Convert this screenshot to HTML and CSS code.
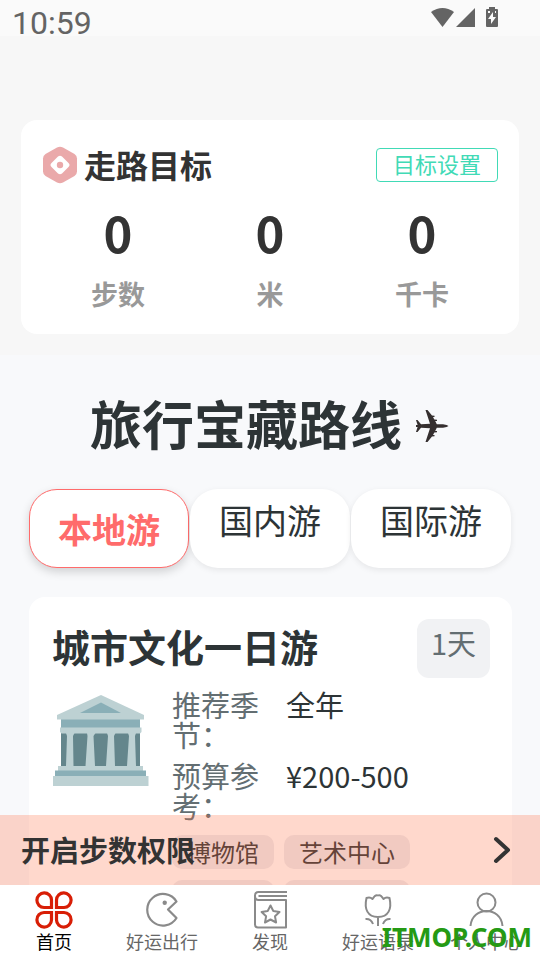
FILE: index.html
```html
<!DOCTYPE html>
<html lang="zh-CN">
<head>
<meta charset="utf-8">
<meta name="viewport" content="width=device-width, initial-scale=1">
<title>首页</title>
<link rel="stylesheet" href="styles.css">
</head>
<body>
<header class="status">
  <span class="clock">10:59</span>
  <svg class="status-icons" width="70" height="22" viewBox="0 0 70 22" fill="#646464" aria-hidden="true">
    <path d="M0 5Q11.500-3 23 5L11.500 20Z"/>
    <path d="M25 20L44 1V20Z"/>
    <path fill-rule="evenodd" d="M58 0h6v2h2q1 0 1 1v16q0 1-1 1H56q-1 0-1-1V3q0-1 1-1h2ZM62 5l-5 7h3v5l5-7h-3ZM57 4v2h2V4ZM64 4v2h1V4Z"/>
  </svg>
</header>

<main class="content">
  <section class="goal">
    <div class="goal-card">
      <div class="goal-head">
        <svg width="36" height="38" viewBox="0 0 36 38" aria-hidden="true">
          <path d="M15 1.500Q18 0 21 1.500L32.500 8Q35 9.500 35 12.500V25.500Q35 28.500 32.500 30L21 36.500Q18 38 15 36.500L3.500 30Q1 28.500 1 25.500V12.500Q1 9.500 3.500 8Z" fill="#eaa9aa"/>
          <path d="M16 10.500Q18 9 20 10.500L26.500 17Q28.500 19 26.500 21L20 27.500Q18 29 16 27.500L9.500 21Q7.500 19 9.500 17Z" fill="#fff"/>
          <circle cx="18" cy="19" r="3.200" fill="#eaa9aa"/>
        </svg>
        <h2>走路目标</h2>
        <button class="goal-set" type="button">目标设置</button>
      </div>
      <dl class="stats">
        <div><dd>0</dd><dt>步数</dt></div>
        <div><dd>0</dd><dt>米</dt></div>
        <div><dd>0</dd><dt>千卡</dt></div>
      </dl>
    </div>
  </section>

  <section class="travel">
    <h1>旅行宝藏路线
      <svg width="34" height="34" viewBox="0 0 34 34" fill="#352f2f" aria-hidden="true">
        <path d="M1 11H2.500L6 15.200 15 14.700 10.500 1H12.500L17 6.500 19.500 6.800V8H18L19.300 10.500 22 10.800V12H20.200L21.800 15.200 28 15.300Q32.500 16 33.500 17 32.500 18 28 18.700L21.800 18.800 20.200 22H22V23.200L19.300 23.500 18 26H19.500V27.200L17 27.500 12.500 33H10.500L15 19.300 6 18.800 2.500 23H1L2.600 18H1V16H2.600Z"/>
      </svg>
    </h1>
    <div class="tabs" role="tablist">
      <button class="tab active" type="button" role="tab" aria-selected="true">本地游</button>
      <button class="tab" type="button" role="tab" aria-selected="false">国内游</button>
      <button class="tab" type="button" role="tab" aria-selected="false">国际游</button>
    </div>
    <article class="route">
      <div class="route-head">
        <h3>城市文化一日游</h3>
        <span class="days">1天</span>
      </div>
      <div class="route-body">
        <svg class="museum" width="96" height="92" viewBox="0 0 96 92" aria-hidden="true">
          <path d="M8 24H87V82H8Z" fill="#64868c"/>
          <path d="M8 23H87V34H8Z" fill="#8aafb7"/>
          <path d="M48 0L91 20V24.500H4V20Z" fill="#bdd1d3"/>
          <path d="M48 7.500L68 18H27Z" fill="#8aafb7"/>
          <path d="M7 32.500H88.500V37L87 38.500H8.500L7 37Z" fill="#bdd1d3"/>
          <path d="M13 38H21.500L20 41 20.500 71H13L14 41ZM34 38H42.500L40.500 41 42 71H32.500L34.500 41ZM54 38H62.500L61 41 62 71H53L55 41ZM75 38H83L82 41 83 71H74L76 41Z" fill="#bdd1d3"/>
          <path d="M5 71H90V76H5Z" fill="#bdd1d3"/>
          <path d="M2 75.500H93V82H2Z" fill="#8aafb7"/>
          <path d="M0 81H95.500V91H0Z" fill="#bdd1d3"/>
        </svg>
        <div class="info">
          <div class="row"><span class="key">推荐季节：</span><span class="value">全年</span></div>
          <div class="row"><span class="key">预算参考：</span><span class="value">¥200-500</span></div>
          <div class="tags">
            <span>博物馆</span><span>艺术中心</span>
            <span class="short"></span><span class="long"></span>
          </div>
        </div>
      </div>
    </article>
  </section>

  <button class="banner" type="button">
    <span>开启步数权限</span>
    <svg width="18" height="28" viewBox="0 0 18 28" fill="none" stroke="#333" stroke-width="4" stroke-linecap="round" stroke-linejoin="round" aria-hidden="true"><path d="M3 3L15 14 3 25"/></svg>
  </button>
</main>

<nav class="nav">
  <a class="current" href="#home">
    <svg width="40" height="40" viewBox="0 0 40 40" fill="none" stroke="#d81e06" stroke-width="3.200" aria-hidden="true">
      <path d="M17.500 17.500H10A7.300 7.300 0 1 1 17.500 10ZM22.500 17.500V10A7.300 7.300 0 1 1 30 17.500ZM17.500 22.500V30A7.300 7.300 0 1 1 10 22.500ZM22.500 22.500H30A7.300 7.300 0 1 1 22.500 30Z"/>
    </svg>首页</a>
  <a href="#trip">
    <svg width="40" height="40" viewBox="0 0 40 40" fill="none" stroke="#8a8a8a" stroke-width="2.200" stroke-linejoin="round" aria-hidden="true">
      <path d="M34.500 11.500A15.800 15.800 0 1 0 34.500 28L26 19.500Z"/><circle cx="22.700" cy="12.700" r="2.200" fill="#8a8a8a" stroke="none"/>
    </svg>好运出行</a>
  <a href="#discover">
    <svg width="40" height="40" viewBox="0 0 40 40" fill="none" stroke="#8a8a8a" stroke-width="2" stroke-linejoin="round" aria-hidden="true">
      <path d="M37 2H8.500Q5 2 5 5.500V34.500Q5 37.500 8 37.500H36V10H8.500Q5 10 5 6M37 6H8.500"/>
      <path d="M20.500 15.500L23.300 21 29.500 22 25 26.300 26.100 32.500 20.500 29.500 15 32.500 16.100 26.300 11.600 22 17.700 21Z"/>
    </svg>发现</a>
  <a href="#quotes">
    <svg width="40" height="40" viewBox="0 0 40 40" fill="none" stroke="#8a8a8a" stroke-width="2" stroke-linejoin="round" aria-hidden="true">
      <path d="M8.500 8Q12 6.500 14.500 9 17.500 4 20 5.500 22.500 4 25.500 9 28 6.500 31.500 8C34 19 30.500 27 20 27S6 19 8.500 8ZM20 27V36M7.500 29Q13 28.500 15 34M32.500 29Q27 28.500 25 34"/>
    </svg>好运语录</a>
  <a href="#me">
    <svg width="40" height="40" viewBox="0 0 40 40" fill="none" stroke="#8a8a8a" stroke-width="2" aria-hidden="true">
      <circle cx="20.500" cy="12.500" r="9"/><path d="M4.500 36C6 16 35 16 36.500 36"/>
    </svg>个人中心</a>
  <span class="watermark">ITMOP.COM</span>
</nav>
</body>
</html>
```
FILE: styles.css
```css
* {
  box-sizing: border-box;
  margin: 0;
  padding: 0;
}

body {
  display: flex;
  flex-direction: column;
  height: 100vh;
  overflow: hidden;
  background: #f8f9fb;
  color: #333;
  font-family: "Noto Sans CJK SC", sans-serif;
}

button {
  border: 0;
  background: none;
  color: inherit;
  font-family: inherit;
  cursor: pointer;
}

svg {
  display: block;
  flex: none;
}

.status {
  display: flex;
  justify-content: space-between;
  align-items: flex-start;
  height: 36px;
  padding: 7px 39px 0 12px;
  background: #fafafa;
}

.clock {
  color: #646464;
  font: 32px/32px Roboto, sans-serif;
}

.content {
  position: relative;
  flex: 1;
  min-height: 0;
  overflow: hidden;
}

.goal {
  padding: 84px 21px 21px;
  background: #f7f7f7;
}

.goal-card {
  padding: 27px 21px 20px;
  border-radius: 16px;
  background: #fff;
}

.goal-head {
  display: flex;
  align-items: center;
  gap: 6px;
  height: 36px;
}

.goal-head h2 {
  padding-bottom: 3px;
  font-size: 32px;
  line-height: 36px;
}

.goal-set {
  margin-left: auto;
  padding: 0 16px 4px;
  border: 1px solid #41dab6;
  border-radius: 4px;
  color: #41dab6;
  font-size: 22px;
  line-height: 28px;
}

.stats {
  display: grid;
  grid-template-columns: repeat(3, 1fr);
  margin-top: 18px;
  text-align: center;
  font-weight: bold;
}

.stats div {
  display: flex;
  flex-direction: column;
  gap: 12px;
}

.stats dd {
  font-size: 49px;
  line-height: 61px;
}

.stats dt {
  color: #999;
  font-size: 27px;
  line-height: 40px;
}

.travel {
  padding: 33px 28px 0 29px;
  color: #2d3436;
}

.travel h1 {
  display: flex;
  justify-content: center;
  align-items: center;
  gap: 13px;
  padding-right: 2px;
  font-size: 52px;
  line-height: 70px;
}

.travel h1 svg {
  margin-top: 6px;
}

.tabs {
  display: grid;
  grid-template-columns: repeat(3, 1fr);
  gap: 1px;
  margin-top: 31px;
  padding-right: 1px;
}

.tab {
  height: 79px;
  padding-bottom: 18px;
  border-radius: 28px;
  background: #fff;
  box-shadow: 0 2px 6px rgba(0, 0, 0, 0.08);
  font-size: 34px;
  line-height: 60px;
}

.tab.active {
  padding-bottom: 0;
  border: 1px solid #ff6b6b;
  box-shadow: 0 4px 10px rgba(0, 0, 0, 0.16);
  color: #ff6b6b;
  font-weight: bold;
}

.route {
  margin-top: 29px;
  padding: 22px 22px 22px 23px;
  border-radius: 16px;
  background: #fff;
}

.route-head {
  display: flex;
  justify-content: space-between;
  align-items: flex-start;
}

.route-head h3 {
  font-size: 38px;
  line-height: 53px;
}

.days {
  padding: 0 14px 13px;
  border-radius: 12px;
  background: #f1f2f4;
  color: #636e72;
  font-size: 29px;
  line-height: 46px;
}

.route-body {
  display: flex;
  gap: 23px;
  margin-top: 11px;
  font-size: 29px;
  line-height: 30px;
}

.museum {
  margin: 6px 0 0 1px;
}

.info {
  flex: 1;
}

.row {
  display: flex;
  gap: 24px;
  margin-bottom: 11px;
}

.key {
  flex: none;
  width: 90px;
  color: #636e72;
}

.tags {
  display: flex;
  flex-wrap: wrap;
  gap: 11px 10px;
  padding-top: 4px;
}

.tags span {
  height: 34px;
  padding: 0 15px;
  border-radius: 10px;
  background: #ececf0;
  font-size: 24px;
  line-height: 33px;
}

.tags .short {
  width: 102px;
}

.tags .long {
  width: 126px;
}

.banner {
  position: absolute;
  right: 0;
  bottom: 0;
  left: 0;
  display: flex;
  justify-content: space-between;
  align-items: center;
  height: 70px;
  padding: 0 29px 0 21px;
  background: rgba(255, 110, 65, 0.27);
  color: #333;
  font-size: 29px;
  font-weight: bold;
}

.banner span {
  padding-bottom: 2px;
}

.nav {
  position: relative;
  display: grid;
  grid-template-columns: repeat(5, 1fr);
  height: 75px;
  padding-top: 5px;
  background: #fff;
}

.nav a {
  display: flex;
  flex-direction: column;
  align-items: center;
  color: #666;
  font-size: 18px;
  line-height: 22px;
  text-decoration: none;
}

.nav .current {
  color: #000;
}

.watermark {
  position: absolute;
  right: 8px;
  bottom: 5px;
  color: #259a14;
  font: bold 26px/36px "Noto Sans", sans-serif;
  pointer-events: none;
}
```
